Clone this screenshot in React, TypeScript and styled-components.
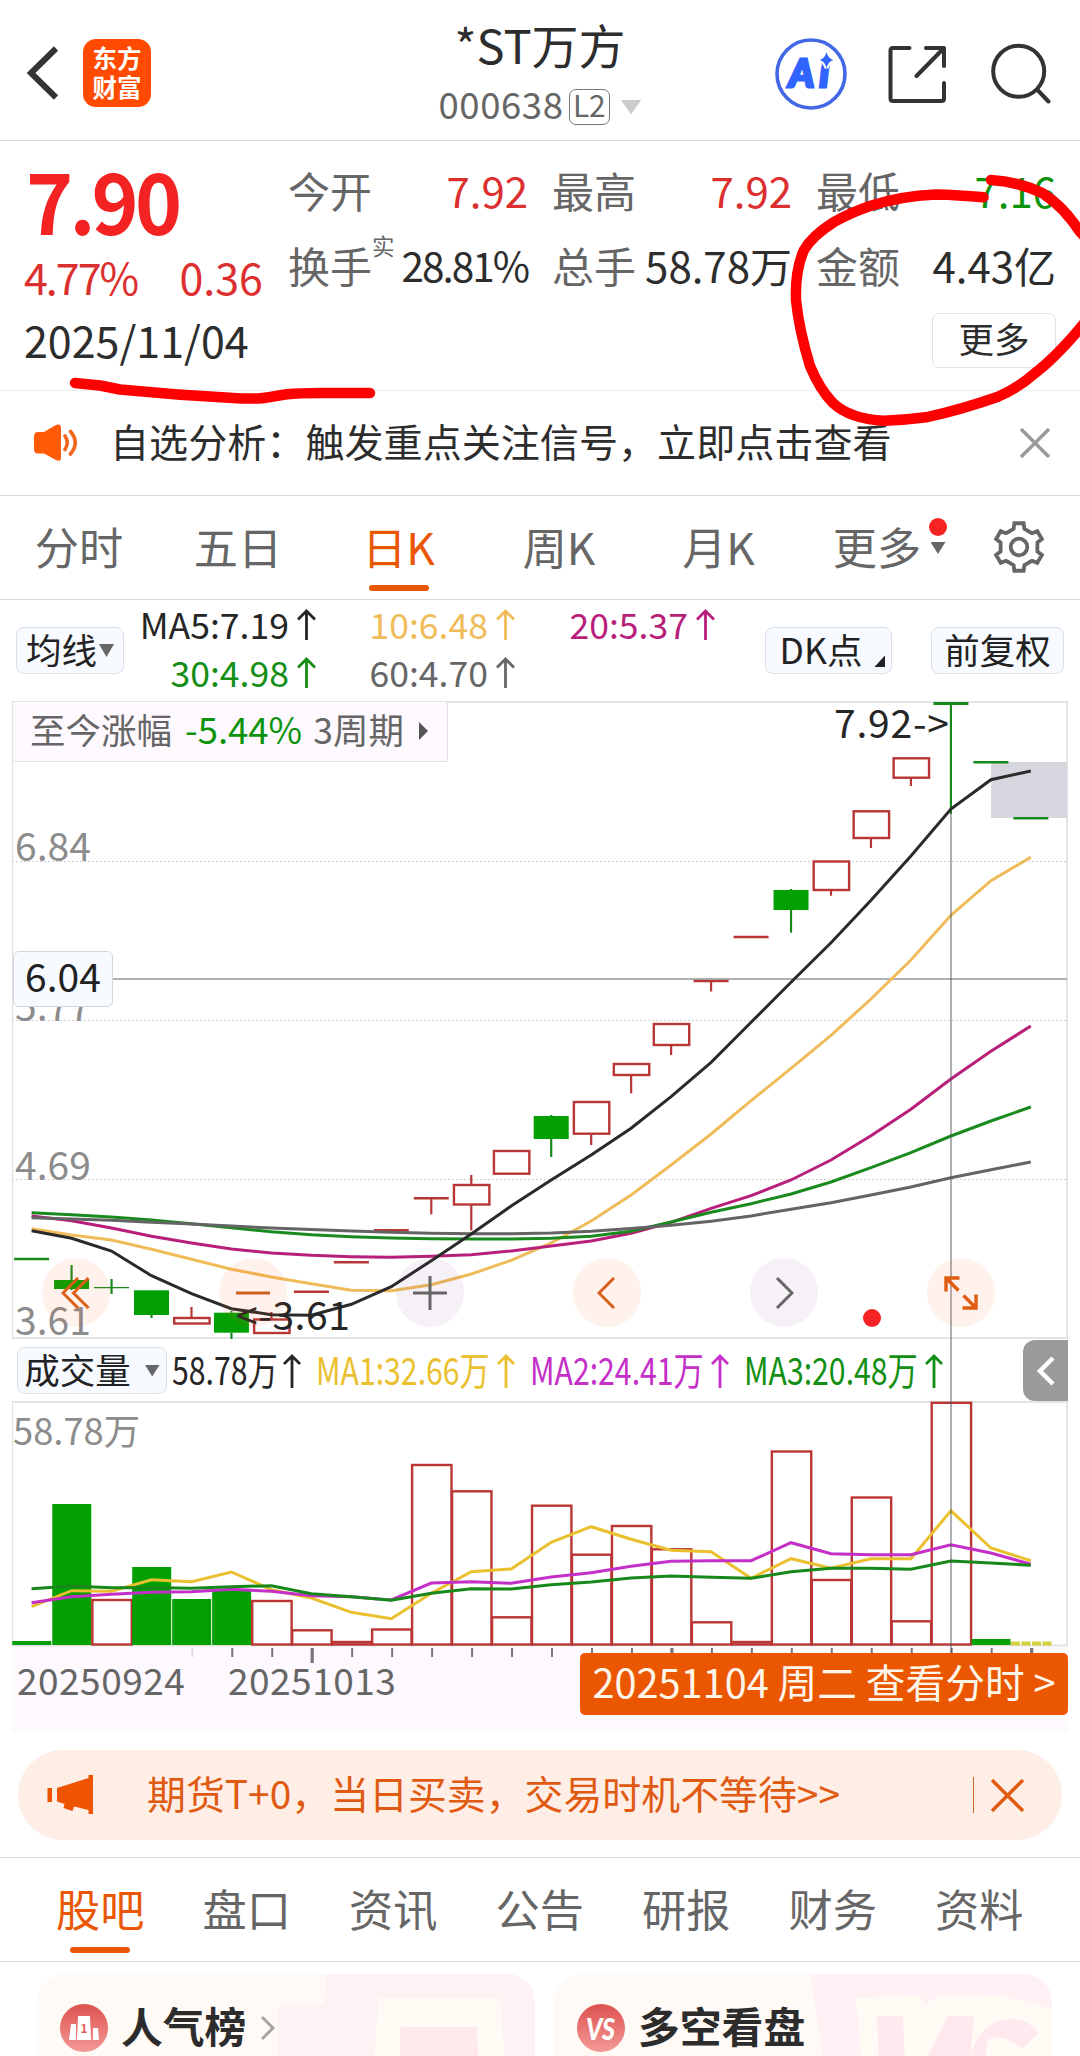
import React from 'react';
import styled, { createGlobalStyle } from 'styled-components';

const GlobalStyle = createGlobalStyle`
  html, body { margin: 0; padding: 0; background: #fff; }
  body { font-family: "Noto Sans CJK SC", "Noto Sans", sans-serif; color: #2b2b2b; }
  * { box-sizing: border-box; }
`;

const C = {
  ink: '#2d2d2d',
  grey: '#666',
  axis: '#8c8c8c',
  line: '#d9d9d9',
  frame: '#e3e3e3',
  red: '#dc2f2f',
  candle: '#b83636',
  green: '#0c930c',
  fill: '#02a002',
  orange: '#e95704',
  yellow: '#f0bc5a',
  volYellow: '#eac02e',
  magenta: '#b81f7b',
  violet: '#c42fc8',
};

const Page = styled.main`
  position: relative;
  width: 1080px;
  height: 2056px;
  overflow: hidden;
  background: #fff;
  white-space: nowrap;
`;

/* ---------- header ---------- */
const Header = styled.header`
  display: grid;
  grid-template-columns: 360px 360px 360px;
  height: 141px;
  border-bottom: 1px solid ${C.line};
`;
const HeaderLeft = styled.div`
  display: flex;
  align-items: center;
  gap: 22px;
  height: 146px;
  padding-left: 25px;
`;
const HeaderRight = styled.div`
  display: flex;
  align-items: center;
  justify-content: flex-end;
  gap: 41px;
  height: 147px;
  padding-right: 27px;
`;
const Logo = styled.div`
  display: flex;
  flex-direction: column;
  align-items: center;
  justify-content: center;
  width: 68px;
  height: 68px;
  border-radius: 13px;
  background: #ff4a00;
  color: #fff;
  font-size: 24.5px;
  font-weight: 700;
  line-height: 29px;
  padding-bottom: 3px;
`;
const TitleBlock = styled.div`
  display: flex;
  flex-direction: column;
  align-items: center;
`;
const StockName = styled.h1`
  margin: 17px 0 0;
  font-size: 47px;
  font-weight: 400;
  line-height: 54px;
  color: ${C.ink};
`;
const CodeRow = styled.div`
  display: flex;
  align-items: center;
  margin-top: 12px;
  height: 44px;
  font-size: 36.5px;
  line-height: 44px;
  letter-spacing: 0.6px;
  color: ${C.grey};
`;
const LevelBadge = styled.span`
  width: 41px;
  height: 36px;
  margin: 3px 11px 0 5px;
  border: 1.5px solid #777;
  border-radius: 7px;
  font-size: 30px;
  line-height: 29px;
  letter-spacing: -0.5px;
  text-align: center;
`;
const Caret = styled.i<{ w: number; h: number; color?: string; left?: number; top?: number }>`
  display: inline-block;
  flex: none;
  width: ${p => p.w}px;
  height: ${p => p.h}px;
  margin: ${p => p.top || 0}px 0 0 ${p => p.left || 0}px;
  background: ${p => p.color || C.grey};
  clip-path: polygon(0 0, 100% 0, 50% 100%);
`;

/* ---------- quote ---------- */
const Quote = styled.section`
  display: grid;
  grid-template-columns: 262px 768px;
  height: 250px;
  padding-left: 26px;
  border-bottom: 1px solid #ededed;
`;
const Price = styled.div`
  margin-top: 14px;
  font-size: 85px;
  font-weight: 700;
  line-height: 85px;
  letter-spacing: -4px;
  color: #f42323;
  transform: scaleX(0.94);
  transform-origin: 0 50%;
`;
const Change = styled.div`
  display: flex;
  justify-content: space-between;
  width: 239px;
  margin: 6px 0 0 -2px;
  font-size: 43px;
  line-height: 60px;
  color: ${C.red};
`;
const Tight = styled.span<{ by: number }>`
  letter-spacing: ${p => p.by}px;
`;
const DateText = styled.div`
  margin: 3px 0 0 -2px;
  font-size: 43px;
  line-height: 60px;
  color: ${C.ink};
`;
const StatsArea = styled.div`
  padding-top: 11px;
`;
const Stats = styled.div`
  display: grid;
  grid-template-columns: repeat(3, 240px);
  column-gap: 24px;
  grid-auto-rows: 75px;
`;
const Stat = styled.div`
  display: flex;
  justify-content: space-between;
  font-size: 42px;
  line-height: 75px;
`;
const StatLabel = styled.span`
  color: ${C.grey};
  font-size: 42px;
`;
const Sup = styled.sup`
  position: relative;
  top: -11px;
  display: inline-block;
  width: 22px;
  margin-left: 0;
  font-size: 22.5px;
  line-height: 22px;
  vertical-align: 17px;
`;
const StatValue = styled.span<{ tone?: string; small?: boolean }>`
  color: ${p => p.tone || C.ink};
  font-size: ${p => (p.small ? 40.5 : 42)}px;
  letter-spacing: ${p => (p.small ? -2 : 0)}px;
`;
const MoreButton = styled.button`
  display: block;
  width: 124px;
  height: 55px;
  margin: 11px 0 0 auto;
  padding: 0 0 6px;
  border: 1px solid #e2e2e6;
  border-radius: 7px;
  background: #fff;
  color: ${C.ink};
  font: 400 35.5px/46px "Noto Sans CJK SC", sans-serif;
`;

/* ---------- notice ---------- */
const Notice = styled.section`
  display: flex;
  align-items: center;
  height: 105px;
  padding: 0 30px 0 33px;
  border-bottom: 1px solid ${C.line};
`;
const NoticeText = styled.span`
  flex: 1;
  margin: -6px 0 0 31px;
  font-size: 39.1px;
  line-height: 52px;
  color: ${C.ink};
`;

/* ---------- tabs ---------- */
const PeriodTabs = styled.nav`
  display: flex;
  height: 104px;
  border-bottom: 1px solid ${C.line};
`;
const Tab = styled.div<{ w: number; active?: boolean }>`
  position: relative;
  display: flex;
  justify-content: center;
  width: ${p => p.w}px;
  padding-top: 18px;
  font-size: 44.2px;
  line-height: 65px;
  color: ${p => (p.active ? C.orange : C.grey)};
  &::after {
    content: '';
    display: ${p => (p.active ? 'block' : 'none')};
    position: absolute;
    left: calc(50% - 30px);
    bottom: 8px;
    width: 60px;
    height: 6px;
    border-radius: 3px;
    background: ${C.orange};
  }
`;
const MoreMark = styled.span`
  position: absolute;
  left: 131px;
  top: 22px;
  display: flex;
  flex-direction: column;
  align-items: center;
  gap: 6px;
`;
const RedDot = styled.i`
  width: 18px;
  height: 18px;
  border-radius: 50%;
  background: #f52323;
`;
const GearSlot = styled.div`
  display: flex;
  margin: 25px 0 0 37px;
`;

/* ---------- indicator row ---------- */
const Indicators = styled.section`
  display: flex;
  height: 101px;
  padding: 0 16px;
`;
const Chip = styled.button<{ w: number }>`
  display: flex;
  align-items: center;
  justify-content: center;
  flex: none;
  width: ${p => p.w}px;
  height: 47px;
  padding: 0 0 4px;
  border: 1px solid #dadfe8;
  border-radius: 8px;
  background: #f7faff;
  color: #222;
  font: 400 35.5px/42px "Noto Sans CJK SC", sans-serif;
`;
const IndicatorChip = styled(Chip)<{ right?: number; left?: number }>`
  margin: 27px ${p => p.right || 0}px 0 ${p => p.left || 0}px;
`;
const Corner = styled.i`
  align-self: flex-end;
  width: 11px;
  height: 12px;
  margin: 0 -8px 2px 12px;
  background: #222;
  clip-path: polygon(100% 0, 100% 100%, 0 100%);
`;
const MaGrid = styled.div`
  display: grid;
  grid-template-columns: 192px 199px 200px;
  grid-auto-rows: 48.5px;
  width: 592px;
`;
const MaItem = styled.span<{ tone: string }>`
  display: flex;
  align-items: center;
  justify-content: flex-end;
  gap: 8px;
  color: ${p => p.tone};
  font-size: 35.6px;
  line-height: 47px;
`;
const MaText = styled.span`
  margin-top: -2px;
`;

/* ---------- chart ---------- */
const ChartPanel = styled.section`
  position: relative;
`;
const Plot = styled.svg`
  display: block;
`;
const RangeBox = styled.div`
  position: absolute;
  left: 12px;
  top: 0;
  display: flex;
  align-items: center;
  width: 436px;
  height: 61px;
  padding: 0 0 6px 17px;
  border: 1.5px solid #e6e0e6;
  background: #fef9fe;
  font-size: 35.5px;
  color: ${C.grey};
`;
const RangeValue = styled.span`
  margin: 0 11px 0 13px;
  font-size: 36.5px;
  color: ${C.green};
`;
const RangeArrow = styled.svg`
  margin: 5px 0 0 15px;
`;
const PriceTag = styled.div`
  position: absolute;
  left: 13px;
  top: 250px;
  width: 100px;
  height: 56px;
  border: 1.5px solid #d3d6de;
  border-radius: 6px;
  background: #f7faff;
  color: #222;
  font-size: 39px;
  line-height: 47px;
  text-align: center;
`;
const FloatBar = styled.div`
  position: absolute;
  left: 42px;
  top: 557px;
  display: flex;
  gap: 109px;
`;
const FloatButton = styled.div<{ warm?: boolean }>`
  display: flex;
  align-items: center;
  justify-content: center;
  width: 68px;
  height: 69px;
  border-radius: 50%;
  background: ${p => (p.warm ? 'rgba(255,90,20,0.085)' : 'rgba(110,50,140,0.065)')};
`;
const FloatDot = styled(RedDot)`
  position: absolute;
  left: 863px;
  top: 608px;
`;
const VolumeHead = styled.div`
  display: flex;
  align-items: center;
  height: 61px;
  padding-left: 17px;
`;
const VolChip = styled(Chip)`
  margin-right: 5px;
`;
const VolItem = styled.span<{ tone: string; gap: number }>`
  display: flex;
  align-items: center;
  margin-right: ${p => p.gap}px;
  color: ${p => p.tone};
`;
const Condensed = styled.span<{ w: number; k: number }>`
  width: ${p => p.w}px;
  font-size: 38.5px;
  line-height: 54px;
  margin-top: -6px;
  margin-right: 8px;
  > b {
    display: inline-block;
    font-weight: 400;
    transform: scaleX(${p => p.k});
    transform-origin: 0 50%;
  }
`;
const Drawer = styled.div`
  display: flex;
  align-items: center;
  justify-content: center;
  width: 45px;
  height: 61px;
  margin: 0 12px 0 auto;
  border-radius: 12px 0 0 12px;
  background: #9c999c;
`;
const CrossV = styled.div`
  position: absolute;
  left: 950px;
  top: 112px;
  width: 2px;
  height: 840px;
  background: rgba(80, 80, 85, 0.45);
`;
const AxisBar = styled.div`
  display: flex;
  height: 85px;
  margin: 0 12px;
  padding-left: 5px;
  background: #fdf9fe;
  color: ${C.grey};
  font-size: 37px;
  line-height: 64px;
  letter-spacing: 0.5px;
`;
const AxisDate = styled.span<{ w: number }>`
  width: ${p => p.w}px;
`;
const DayButton = styled.div`
  width: 488px;
  height: 62px;
  margin: 6px 0 0 auto;
  border-radius: 5px;
  background: #eb5600;
  color: #fff6ea;
  font-size: 39.7px;
  line-height: 55px;
  letter-spacing: 0;
  text-align: center;
`;

/* ---------- promo ---------- */
const Promo = styled.section`
  display: flex;
  align-items: center;
  height: 90px;
  margin: 18px 18px 17px;
  padding: 0 38px 0 29px;
  border-radius: 45px;
  background: #ffeee6;
  color: #e05a12;
`;
const PromoText = styled.span`
  flex: 1;
  margin: -7px 0 0 54px;
  font-size: 38.9px;
  line-height: 52px;
`;
const PromoDivider = styled.i`
  width: 1px;
  height: 36px;
  margin-right: 17px;
  background: #d0652b;
`;

const BottomTabs = styled.nav`
  display: flex;
  height: 105px;
  padding-left: 27px;
  border-top: 1px solid ${C.line};
  border-bottom: 1px solid ${C.line};
`;

const Cards = styled.section`
  display: flex;
  gap: 19px;
  height: 110px;
  padding: 12px 0 0 37px;
`;
const Card = styled.article`
  position: relative;
  display: flex;
  align-items: center;
  width: 498px;
  height: 108px;
  padding-left: 23px;
  border-radius: 28px 28px 0 0;
  background: #fffaf6;
  overflow: hidden;
`;
const CardArt = styled.svg`
  position: absolute;
  left: 0;
  top: 0;
`;
const CardTitle = styled.h2`
  position: relative;
  margin: -7px 13px 0 13px;
  font-size: 41.8px;
  font-weight: 700;
  line-height: 56px;
  color: #2c2c2c;
`;
const CardIcon = styled.svg`
  position: relative;
`;
const Scribble = styled.svg`
  position: absolute;
  left: 0;
  top: 0;
  pointer-events: none;
`;

/* ---------- data ---------- */
const px = (i: number) => 31.6 + 39.97 * i;

type Candle = { k: 'r' | 'g'; o: number; c: number; hi?: number; lo?: number; thin?: number };
const candles: Candle[] = [
  { k: 'g', o: 1259, c: 1259 },
  { k: 'g', o: 1280, c: 1289, hi: 1265, lo: 1290 },
  { k: 'g', o: 1287.7, c: 1287.7, hi: 1279, lo: 1294, thin: 1.3 },
  { k: 'g', o: 1290.3, c: 1315, hi: 1290, lo: 1318 },
  { k: 'r', o: 1318, c: 1323.5, hi: 1307 },
  { k: 'g', o: 1312.7, c: 1332.7, hi: 1311, lo: 1339 },
  { k: 'r', o: 1319.5, c: 1333, hi: 1312 },
  { k: 'r', o: 1291.7, c: 1291.7 },
  { k: 'r', o: 1262.3, c: 1262.3 },
  { k: 'r', o: 1230.3, c: 1230.3 },
  { k: 'r', o: 1198.3, c: 1198.3, lo: 1214.3 },
  { k: 'r', o: 1185, c: 1204.5, hi: 1175, lo: 1230.5 },
  { k: 'r', o: 1151, c: 1173.7 },
  { k: 'g', o: 1116, c: 1139, hi: 1115, lo: 1157 },
  { k: 'r', o: 1102, c: 1133.7, lo: 1145 },
  { k: 'r', o: 1064, c: 1075, lo: 1093.3 },
  { k: 'r', o: 1024, c: 1045, lo: 1055 },
  { k: 'r', o: 981, c: 981, lo: 991.5, thin: 2.6 },
  { k: 'r', o: 937, c: 937 },
  { k: 'g', o: 890, c: 910, hi: 889, lo: 932.7 },
  { k: 'r', o: 861.5, c: 890, lo: 895.7 },
  { k: 'r', o: 811.3, c: 838, lo: 848 },
  { k: 'r', o: 758.3, c: 777.7, lo: 786 },
  { k: 'g', o: 703.5, c: 703.5, lo: 814, thin: 3 },
  { k: 'g', o: 762.3, c: 762.3, thin: 2.6 },
  { k: 'g', o: 818.3, c: 818.3, thin: 2.6 },
];

const ma: [string, number[]][] = [
  [C.yellow, [1228.7, 1235, 1240, 1249.3, 1259.3, 1269.3, 1277, 1283.7, 1290.3, 1290.7, 1284.7, 1274, 1260.3, 1243, 1221, 1195, 1165, 1134, 1100.7, 1068.3, 1035.3, 999, 960, 915.3, 880.7, 857.3]],
  [C.magenta, [1216, 1220.7, 1228, 1236.3, 1243, 1249, 1253, 1255.3, 1256.7, 1257.3, 1256.3, 1254.7, 1251, 1246, 1241, 1233.3, 1222.3, 1208.3, 1195.7, 1180, 1160, 1135.7, 1109.3, 1079, 1051.3, 1026]],
  ['#1a8a1f', [1212.7, 1214.7, 1217, 1220, 1223.7, 1227.7, 1231.7, 1234.7, 1236.7, 1238, 1238.7, 1239, 1239, 1238.3, 1236.3, 1231.3, 1222, 1212.3, 1203.7, 1194, 1182, 1167.7, 1152.7, 1136, 1121, 1107]],
  ['#646464', [1217.7, 1219, 1220.3, 1222.2, 1224, 1226, 1228, 1229.6, 1231, 1232.3, 1233.3, 1233.7, 1233.7, 1233, 1231.3, 1228.6, 1225.3, 1221.3, 1215.9, 1209.3, 1202.7, 1195, 1187, 1177.7, 1169.7, 1162]],
  ['#2a2a2a', [1230.7, 1238.3, 1251, 1275.7, 1293.7, 1308.7, 1314.7, 1315.3, 1304.3, 1286.7, 1260.7, 1234, 1206, 1180, 1155, 1128.3, 1096.7, 1062.3, 1022.3, 982.3, 942.7, 900.3, 856, 809, 779.7, 771]],
];

const bars: [string, number][] = [
  ['g', 1641], ['g', 1504], ['r', 1600], ['g', 1567], ['g', 1599], ['g', 1590], ['r', 1601], ['r', 1630.3],
  ['r', 1642], ['r', 1629.5], ['r', 1465], ['r', 1491.3], ['r', 1617.3], ['r', 1505.7], ['r', 1554.7], ['r', 1526],
  ['r', 1549.3], ['r', 1622.3], ['r', 1642], ['r', 1451.5], ['r', 1580], ['r', 1497.5], ['r', 1621.3], ['r', 1402.8], ['g', 1639],
];

const volMa: [string, number[]][] = [
  [C.volYellow, [1606.7, 1590.7, 1591.3, 1579.7, 1581.7, 1572, 1589.7, 1598, 1612.3, 1618.7, 1593.3, 1571.7, 1569, 1542.3, 1526.7, 1539.3, 1550.3, 1551.7, 1578.3, 1558.7, 1568.3, 1558.7, 1558.7, 1510.7, 1548, 1560.7]],
  [C.violet, [1602.7, 1596.7, 1594.3, 1592.3, 1591.7, 1589.3, 1591.3, 1595.7, 1596.7, 1600, 1583, 1581.7, 1583.3, 1577, 1572.7, 1566.3, 1561.3, 1560.7, 1560.7, 1542.7, 1553.7, 1554.7, 1554.7, 1544.7, 1553, 1564.3]],
  ['#16891a', [1588.7, 1586, 1587.7, 1587.5, 1588.3, 1586.7, 1585.7, 1593.7, 1596.7, 1600.3, 1593.3, 1588.7, 1589, 1584.7, 1582, 1578, 1576, 1577.3, 1578.3, 1571.7, 1568.3, 1568.3, 1569.3, 1561, 1563, 1565.3]],
];

const points = (ys: number[]) => ys.map((y, i) => `${px(i).toFixed(1)},${y}`).join(' ');

/* ---------- icons ---------- */
const UpArrow = ({ w = 19, h = 31 }: { w?: number; h?: number }) => (
  <svg width={w} height={h} viewBox={`0 0 ${w} ${h}`} fill="none" stroke="currentColor" strokeWidth="2.8">
    <path d={`M${w / 2} ${h}V2M1 ${w / 2 + 1}L${w / 2} 2L${w - 1} ${w / 2 + 1}`} />
  </svg>
);

const Gear = () => {
  const pts: string[] = [];
  for (let t = 0; t < 6; t++) {
    const a = -90 + t * 60;
    const put = (r: number, d: number) => {
      const rad = ((a + d) * Math.PI) / 180;
      pts.push(`${(26 + r * Math.cos(rad)).toFixed(2)},${(26 + r * Math.sin(rad)).toFixed(2)}`);
    };
    put(18.5, -23);
    put(19, -16.5);
    put(24.2, -11);
    put(24.2, 11);
    put(19, 16.5);
    put(18.5, 23);
  }
  return (
    <svg width="52" height="52" viewBox="0 0 52 52" fill="none" stroke={C.grey} strokeWidth="3.8">
      <polygon points={pts.join(' ')} />
      <circle cx="26" cy="26" r="8.3" />
    </svg>
  );
};

const Stroke = ({ d, w, h, color, sw = 3 }: { d: string; w: number; h: number; color: string; sw?: number }) => (
  <svg width={w} height={h} viewBox={`0 0 ${w} ${h}`} fill="none" stroke={color} strokeWidth={sw}>
    <path d={d} />
  </svg>
);

const PriceChart = () => (
  <Plot width="1080" height="639" viewBox="0 701 1080 639">
    <path d="M12 702H1068" stroke={C.frame} strokeWidth="2" />
    <path d="M12.5 702V1338" stroke={C.frame} strokeWidth="1.3" />
    <path d="M1067 702V1338" stroke={C.frame} strokeWidth="2" />
    <path d="M12 1338H1068" stroke={C.frame} strokeWidth="2" />
    {[861.5, 1020.5, 1179.5].map(y => (
      <path key={y} d={`M12 ${y}H1067`} stroke="#cfcfcf" strokeWidth="1" strokeDasharray="2 2" />
    ))}
    <rect x="991" y="762" width="76" height="56" fill="#d6d6df" />
    <g fontSize="39" fill={C.axis}>
      <text x="15" y="861">6.84</text>
      <text x="15" y="1020.5">5.77</text>
      <text x="15" y="1179.5">4.69</text>
      <text x="15" y="1335">3.61</text>
    </g>
    {candles.map((c, i) => {
      const x = px(i);
      const flat = c.o === c.c;
      const col = c.k === 'g' ? '#188a1c' : C.candle;
      return (
        <g key={i}>
          {c.hi !== undefined && <path d={`M${x} ${c.hi}V${c.o}`} stroke={col} strokeWidth="2.2" />}
          {c.lo !== undefined && <path d={`M${x} ${c.c}V${c.lo}`} stroke={col} strokeWidth="2.2" />}
          {flat ? (
            <path d={`M${x - 17.5} ${c.o}H${x + 17.5}`} stroke={col} strokeWidth={c.thin || 2.4} />
          ) : c.k === 'g' ? (
            <rect x={x - 17.5} y={c.o} width="35" height={c.c - c.o} fill={C.fill} />
          ) : (
            <rect x={x - 17.3} y={c.o} width="35.4" height={c.c - c.o} fill="#fff" stroke={col} strokeWidth="2.4" />
          )}
        </g>
      );
    })}
    <path d="M112 979H1067" stroke="#808080" strokeOpacity=".62" strokeWidth="2" />
    {ma.map(([color, ys]) => (
      <polyline key={color} points={points(ys)} fill="none" stroke={color} strokeWidth="3" />
    ))}
    <g fontSize="39" fill="#262626">
      <text x="834" y="738" letterSpacing=".8">7.92-&gt;</text>
      <text x="236" y="1329.5" letterSpacing=".6">&lt;-3.61</text>
    </g>
  </Plot>
);

const VolumeChart = () => (
  <Plot width="1080" height="246" viewBox="0 1401 1080 246">
    <path d="M12 1402H1068" stroke={C.frame} strokeWidth="2" />
    <path d="M12.5 1402V1646" stroke={C.frame} strokeWidth="1.3" />
    <path d="M1067 1402V1646M12 1645.6H1068" stroke={C.frame} strokeWidth="2" />
    <text x="13" y="1444.5" fontSize="36.3" fill={C.axis}>58.78万</text>
    {bars.map(([k, top], i) => {
      const x = px(i);
      return k === 'g' ? (
        <rect key={i} x={x - 19.3} y={top} width="39" height={1645 - top} fill={C.fill} />
      ) : (
        <rect key={i} x={x - 19.2} y={top} width="39.4" height={1644.5 - top} fill="#fff" stroke="#bb3535" strokeWidth="2.4" />
      );
    })}
    <path d="M1011 1643.5H1052" stroke="#d3cf3f" strokeWidth="4" strokeDasharray="9 1.5" />
    {volMa.map(([color, ys]) => (
      <polyline key={color} points={points(ys)} fill="none" stroke={color} strokeWidth="3" />
    ))}
  </Plot>
);

const TickMarks = styled.svg`
  position: absolute;
  left: 0;
  top: 946px;
`;

const Ticks = () => (
  <TickMarks width="1080" height="18" viewBox="0 1647 1080 18">
    {Array.from({ length: 22 }, (_, n) => n + 4).map(i => {
      const major = (i - 7) % 9 === 0;
      const end = i >= 14 ? 1653 : major ? 1663 : 1657;
      return (
        <path
          key={i}
          d={`M${px(i) + 0.8} 1648V${end}`}
          stroke={i === 4 ? '#ddd' : '#777'}
          strokeWidth={major ? 3.2 : 2}
        />
      );
    })}
  </TickMarks>
);

const Ma = ({ tone, children }: { tone: string; children: React.ReactNode }) => (
  <MaItem tone={tone}>
    <MaText>{children}</MaText>
    <UpArrow />
  </MaItem>
);

const Vol = ({ tone, w, gap = 15, children }: { tone: string; w: number; gap?: number; children: React.ReactNode }) => (
  <VolItem tone={tone} gap={gap}>
    <Condensed w={w} k={0.785}><b>{children}</b></Condensed>
    <UpArrow w={18} h={34} />
  </VolItem>
);

const bottomTabs = ['股吧', '盘口', '资讯', '公告', '研报', '财务', '资料'];

export default function App() {
  return (
    <Page>
      <GlobalStyle />
      <Header>
        <HeaderLeft>
          <Stroke w={36} h={60} sw={6} color="#333" d="M31 5.5L6 30L31 54.5" />
          <Logo>
            <span>东方</span>
            <span>财富</span>
          </Logo>
        </HeaderLeft>
        <TitleBlock>
          <StockName>*ST万方</StockName>
          <CodeRow>
            <MaText>000638</MaText>
            <LevelBadge>L2</LevelBadge>
            <Caret w={21} h={15} top={4} color="#ccc" />
          </CodeRow>
        </TitleBlock>
        <HeaderRight>
          <svg width="72" height="72" viewBox="0 0 72 72">
            <circle cx="36" cy="36" r="34" fill="none" stroke="#4268e6" strokeWidth="3.6" />
            <text x="14" y="49" fontSize="38" fontWeight="900" fontStyle="italic" fill="#3164ff" stroke="#3164ff" strokeWidth="3" fontFamily="Lato, sans-serif" textLength="40">Ai</text>
            <path d="M51.5 14Q53 20.500 58.500 22Q53 23.500 51.500 30Q50 23.500 44.500 22Q50 20.500 51.500 14Z" fill="#3164ff" stroke="#fff" strokeWidth="4" paintOrder="stroke" />
          </svg>
          <svg width="60" height="60" viewBox="887 43 60 60" fill="none" stroke="#333" strokeWidth="4" strokeLinecap="round" strokeLinejoin="round">
            <path d="M908.5 47H892Q889.5 47 889.5 49.5V97.5Q889.5 100 892 100H940.5Q943 100 943 97.5V82" />
            <path d="M925 47H943V65M915.5 75L943 47" />
          </svg>
          <svg width="64" height="64" viewBox="989 41 64 64" fill="none" stroke="#333" strokeWidth="4" strokeLinecap="round">
            <circle cx="1018.7" cy="70.3" r="25.5" />
            <path d="M1037.5 89L1048.5 100.5" />
          </svg>
        </HeaderRight>
      </Header>

      <Quote>
        <div>
          <Price>7.90</Price>
          <Change>
            <Tight by={-2}>4.77%</Tight>
            <span>0.36</span>
          </Change>
          <DateText>2025/11/04</DateText>
        </div>
        <StatsArea>
          <Stats>
            <Stat><StatLabel>今开</StatLabel><StatValue tone={C.red}>7.92</StatValue></Stat>
            <Stat><StatLabel>最高</StatLabel><StatValue tone={C.red}>7.92</StatValue></Stat>
            <Stat><StatLabel>最低</StatLabel><StatValue tone={C.green}>7.16</StatValue></Stat>
            <Stat><StatLabel>换手<Sup>实</Sup></StatLabel><StatValue small>28.81%</StatValue></Stat>
            <Stat><StatLabel>总手</StatLabel><StatValue>58.78万</StatValue></Stat>
            <Stat><StatLabel>金额</StatLabel><StatValue>4.43亿</StatValue></Stat>
          </Stats>
          <MoreButton>更多</MoreButton>
        </StatsArea>
      </Quote>

      <Notice>
        <svg width="46" height="38" viewBox="33 424 46 38">
          <path d="M38 432H44L55 425.5Q61 422.500 61 428V457.500Q61 463 55 459.500L44 453.500H38Q34 453.500 34 449V437Q34 432 38 432Z" fill="#ff5a08" />
          <path d="M65 436Q69.500 442.500 65 449.500M70.500 431.500Q80 442.500 70.500 454" fill="none" stroke="#f2661c" strokeWidth="3.600" strokeLinecap="round" />
        </svg>
        <NoticeText>自选分析：触发重点关注信号，立即点击查看</NoticeText>
        <Stroke w={30} h={30} sw={3.4} color="#999" d="M1 1L29 29M29 1L1 29" />
      </Notice>

      <PeriodTabs>
        <Tab w={158}>分时</Tab>
        <Tab w={160}>五日</Tab>
        <Tab w={161} active>日K</Tab>
        <Tab w={160}>周K</Tab>
        <Tab w={159}>月K</Tab>
        <Tab w={158}>
          更多
          <MoreMark><RedDot /><Caret w={15} h={12} /></MoreMark>
        </Tab>
        <GearSlot><Gear /></GearSlot>
      </PeriodTabs>

      <Indicators>
        <IndicatorChip w={108}>均线<Caret w={15} h={13} top={4} left={2} /></IndicatorChip>
        <MaGrid>
          <Ma tone="#262626">MA5:7.19</Ma>
          <Ma tone={C.yellow}>10:6.48</Ma>
          <Ma tone={C.magenta}>20:5.37</Ma>
          <Ma tone="#148e14">30:4.98</Ma>
          <Ma tone={C.grey}>60:4.70</Ma>
        </MaGrid>
        <IndicatorChip w={127} left={50} right={39}>DK点<Corner /></IndicatorChip>
        <IndicatorChip w={133}>前复权</IndicatorChip>
      </Indicators>

      <ChartPanel>
        <PriceChart />
        <VolumeHead>
          <VolChip w={150}>成交量<Caret w={15} h={12} left={14} top={4} /></VolChip>
          <Vol tone="#262626" w={103}>58.78万</Vol>
          <Vol tone={C.volYellow} w={173}>MA1:32.66万</Vol>
          <Vol tone={C.violet} w={173}>MA2:24.41万</Vol>
          <Vol tone="#128f12" w={173} gap={0}>MA3:20.48万</Vol>
          <Drawer><Stroke w={20} h={30} sw={4.5} color="#fff" d="M17 2L4 15L17 28" /></Drawer>
        </VolumeHead>
        <VolumeChart />
        <AxisBar>
          <AxisDate w={211}>20250924</AxisDate>
          <AxisDate w={170}>20251013</AxisDate>
          <DayButton>20251104 周二 查看分时 &gt;</DayButton>
        </AxisBar>
        <Ticks />
        <CrossV />
        <RangeBox>
          至今涨幅<RangeValue>-5.44%</RangeValue>3周期
          <RangeArrow width="9" height="18" viewBox="0 0 9 18"><path d="M0 0L9 9L0 18Z" fill="#555" /></RangeArrow>
        </RangeBox>
        <PriceTag>6.04</PriceTag>
        <FloatBar>
          <FloatButton warm><Stroke w={30} h={32} color="#dd5f16" d="M17 1L2 16L17 31M27.500 1L12.500 16L27.500 31" /></FloatButton>
          <FloatButton warm><Stroke w={34} h={4} color="#cc5f20" d="M0 2H34" /></FloatButton>
          <FloatButton><Stroke w={34} h={34} color="#666" d="M0 17H34M17 0V34" /></FloatButton>
          <FloatButton warm><Stroke w={20} h={32} color="#d9601a" d="M17 1L2 16L17 31" /></FloatButton>
          <FloatButton><Stroke w={20} h={32} color="#666" d="M3 1L18 16L3 31" /></FloatButton>
          <FloatButton warm><Stroke w={34} h={34} sw={3.4} color="#e05c12" d="M2 15.500V2H15.500M2 2L14.500 14.500M32 18.500V32H18.500M32 32L19.500 19.500" /></FloatButton>
        </FloatBar>
        <FloatDot />
      </ChartPanel>

      <Promo>
        <svg width="46" height="40" viewBox="47 1775 46 40" fill="#ee5400">
          <path d="M47.500 1788H52V1802H47.500ZM57 1788L88.500 1778V1775H93V1814H88.500V1810L74 1806.500L72.500 1811L63.500 1808L64.500 1804L57 1801.500Z" />
        </svg>
        <PromoText>期货T+0，当日买卖，交易时机不等待&gt;&gt;</PromoText>
        <PromoDivider />
        <Stroke w={33} h={33} sw={3.4} color="#e05a12" d="M1 1L32 32M32 1L1 32" />
      </Promo>

      <BottomTabs>
        {bottomTabs.map((t, i) => (
          <Tab key={t} w={146.5} active={i === 0}>{t}</Tab>
        ))}
      </BottomTabs>

      <Cards>
        <Card>
          <CardArt width="498" height="108" viewBox="37 1974 498 108">
            <path d="M326 1974H535V2082H278V2005H324Z" fill="#fff2f4" />
            <path d="M379 1998H500L506 2082H372Z" fill="#fffaf4" />
            <path d="M400.500 2027H477L479 2082H399Z" fill="#ffe9ec" />
          </CardArt>
          <CardIcon width="48" height="48" viewBox="0 0 48 48">
            <circle cx="24" cy="24" r="24" fill="url(#badge)" />
            <defs>
              <linearGradient id="badge" x1="0" y1="0" x2="0" y2="1">
                <stop offset="0" stopColor="#dd524f" />
                <stop offset="1" stopColor="#f39a96" />
              </linearGradient>
            </defs>
            <path d="M11 20H16V36H9ZM18 12H30L31 36H17ZM33 24H38L39 36H33Z" fill="#fff" />
            <text x="20.500" y="29" fontSize="12" fontWeight="700" fill="#e0605d">1</text>
          </CardIcon>
          <CardTitle>人气榜</CardTitle>
          <Stroke w={18} h={26} sw={3} color="#aaa5a5" d="M3 2L14 13L3 24" />
        </Card>
        <Card>
          <CardArt width="498" height="108" viewBox="554 1974 498 108">
            <path d="M810 1974H1052V2082H827Z" fill="#fff1f4" />
            <path d="M856 1998L920 1996L926 2004L943 1995Q1010 1992 1052 2010V2082H864Z" fill="#fffaf4" />
            <path d="M877 2016H903L906 2082H880ZM948 2016H974L968 2082H915ZM971 2056Q978 2022 1010 2019Q1030 2020 1038 2033L1022 2049Q1004 2032 987 2040L984 2082H968Z" fill="#ffe9ee" />
          </CardArt>
          <CardIcon width="48" height="48" viewBox="0 0 48 48">
            <circle cx="24" cy="24" r="24" fill="url(#badge)" />
            <text x="9" y="36" fontSize="31" fontWeight="900" fontStyle="italic" fontFamily="Lato, sans-serif" fill="#fff" textLength="29" lengthAdjust="spacingAndGlyphs">VS</text>
          </CardIcon>
          <CardTitle>多空看盘</CardTitle>
        </Card>
      </Cards>

      <Scribble width="1080" height="440" viewBox="0 0 1080 440" fill="none" stroke="#fe0000" strokeWidth="10.500" strokeLinecap="round" strokeLinejoin="round">
        <path d="M75 383L100 385.500L120 389.500Q180 395.500 241 398.500H258Q266 398 285 394.500Q300 393 320 393H370" />
        <path d="M983.500 197.300Q958 195 936 194.500Q900 196 870 206Q850 213 834 222Q812 236 804 250Q795 270 796 300Q799 330 810 366Q820 390 833 403Q850 419 884 420.700Q906 420 926 417.300Q960 410 998 396.700Q1018 388 1034 374Q1060 354 1090 316Q1120 270 1080 232Q1064 207 1043 193.500Q1020 182 991 180" />
      </Scribble>
    </Page>
  );
}
